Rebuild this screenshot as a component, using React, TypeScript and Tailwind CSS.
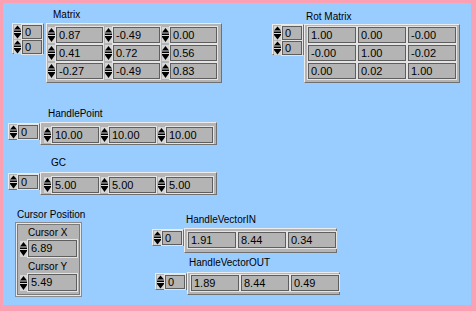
import React from "react";

// LabVIEW style front panel: Matrix / Rot Matrix / vectors / cursor cluster

function Spin({ tall }: { tall?: boolean }) {
  const h = tall ? 16 : 14;
  return (
    <svg width="7" height={h} viewBox={`0 0 7 ${h}`} className="shrink-0 block">
      <rect x="0" y="0" width="7" height={h} fill="#d6d6d6" />
      <path d={`M3.5 ${tall ? 1 : 0.5} L7 ${tall ? 5.5 : 4.5} L0 ${tall ? 5.5 : 4.5} Z`} fill="#000" />
      <rect x="0" y={tall ? 6.5 : 5.5} width="7" height="1.5" fill="#000" />
      <rect x="0" y={tall ? 9 : 8} width="7" height="1" fill="#000" />
      <path d={`M0 ${tall ? 10 : 9} L7 ${tall ? 10 : 9} L3.5 ${tall ? 15 : 13.5} Z`} fill="#000" />
    </svg>
  );
}

function Num({ v, className }: { v: string; className: string }) {
  return (
    <div
      className={`bg-[#b4b4b4] border border-[#5e5e5e] shadow-[0_0_0_1px_#e4e4e4] pl-[2px] text-[11px] text-black overflow-hidden whitespace-nowrap ${className}`}
    >
      {v}
    </div>
  );
}

const frame = "bg-[#b4b4b4] border border-t-[#ececec] border-l-[#ececec] border-b-[#707070] border-r-[#707070]";
const label = "text-[10px] leading-[12px] text-black whitespace-nowrap";

function Index({ rows, className }: { rows: number; className: string }) {
  return (
    <div className={`${frame} shrink-0 flex flex-col gap-[1px] p-[1px] ${className}`}>
      {Array.from({ length: rows }).map((_, i) => (
        <div key={i} className="flex items-center gap-[1px]">
          <Spin />
          <Num v="0" className="w-[22px] h-[14px] leading-[12px]" />
        </div>
      ))}
    </div>
  );
}

function SpinCell({ v }: { v: string }) {
  return (
    <div className="flex items-center gap-[1px] w-[57px]">
      <Spin tall />
      <Num v={v} className="w-[47px] h-[16px] leading-[14px]" />
    </div>
  );
}

function Cell({ v }: { v: string }) {
  return <Num v={v} className="w-[48px] h-[16px] leading-[14px]" />;
}

const matrix = [
  ["0.87", "-0.49", "0.00"],
  ["0.41", "0.72", "0.56"],
  ["-0.27", "-0.49", "0.83"],
];

const rot = [
  ["1.00", "0.00", "-0.00"],
  ["-0.00", "1.00", "-0.02"],
  ["0.00", "0.02", "1.00"],
];

export default function App() {
  return (
    <div className="w-[476px] h-[311px] bg-[#fb9fb3] pt-[3px] pl-[3px] pr-[5px] pb-[6px] font-['Liberation_Sans',Arial,sans-serif]">
      <div className="relative w-full h-full bg-[#99ccff]">
        {/* Matrix */}
        <div className="absolute left-[9px] top-[6px] flex flex-col">
          <div className={`${label} ml-[41px]`}>Matrix</div>
          <div className="mt-[2px] flex items-start gap-[2px]">
            <Index rows={2} className="w-[32px] h-[31px]" />
            <div className={`${frame} w-[176px] h-[60px] pl-[1px] pt-[3px] flex flex-col gap-[2px]`}>
              {matrix.map((r, i) => (
                <div key={i} className="flex">
                  {r.map((v, j) => (
                    <SpinCell key={j} v={v} />
                  ))}
                </div>
              ))}
            </div>
          </div>
        </div>

        {/* Rot Matrix */}
        <div className="absolute left-[269px] top-[8px] flex flex-col">
          <div className={`${label} ml-[34px]`}>Rot Matrix</div>
          <div className="mt-[1px] flex items-start">
            <Index rows={2} className="w-[32px] h-[31px]" />
            <div className={`${frame} w-[156px] h-[59px] pl-[3px] pt-[2px] flex flex-col gap-[2px]`}>
              {rot.map((r, i) => (
                <div key={i} className="flex gap-[2px]">
                  {r.map((v, j) => (
                    <Cell key={j} v={v} />
                  ))}
                </div>
              ))}
            </div>
          </div>
        </div>

        {/* HandlePoint */}
        <div className="absolute left-[5px] top-[105px] flex flex-col">
          <div className={`${label} ml-[40px]`}>HandlePoint</div>
          <div className="mt-[2px] flex items-start">
            <Index rows={1} className="mt-[1px] w-[32px] h-[17px]" />
            <div className={`${frame} w-[177px] h-[23px] pl-[3px] pt-[2px] flex`}>
              {["10.00", "10.00", "10.00"].map((v, j) => (
                <SpinCell key={j} v={v} />
              ))}
            </div>
          </div>
        </div>

        {/* GC */}
        <div className="absolute left-[5px] top-[154px] flex flex-col">
          <div className={`${label} ml-[43px]`}>GC</div>
          <div className="mt-[3px] flex items-start">
            <Index rows={1} className="mt-[1px] w-[32px] h-[17px]" />
            <div className={`${frame} w-[177px] h-[23px] pl-[3px] pt-[2px] flex`}>
              {["5.00", "5.00", "5.00"].map((v, j) => (
                <SpinCell key={j} v={v} />
              ))}
            </div>
          </div>
        </div>

        {/* Cursor Position cluster */}
        <div className="absolute left-[12px] top-[206px] flex flex-col">
          <div className={`${label} ml-[2px]`}>Cursor Position</div>
          <div className="mt-[1px] w-[67px] h-[75px] bg-[#b4b4b4] border border-[#8a8a8a] shadow-[inset_0_0_0_1px_#e8e8e8,inset_0_0_0_2px_#7a7a7a] pl-[4px] pt-[4px] flex flex-col">
            <div className={`${label} pl-[8px]`}>Cursor X</div>
            <div className="mt-[1px] flex items-center gap-[1px]">
              <Spin tall />
              <Num v="6.89" className="w-[49px] h-[17px] leading-[15px]" />
            </div>
            <div className={`${label} mt-[4px] pl-[8px]`}>Cursor Y</div>
            <div className="mt-[1px] flex items-center gap-[1px]">
              <Spin tall />
              <Num v="5.49" className="w-[49px] h-[17px] leading-[15px]" />
            </div>
          </div>
        </div>

        {/* HandleVectorIN */}
        <div className="absolute left-[149px] top-[211px] flex flex-col">
          <div className={`${label} ml-[34px]`}>HandleVectorIN</div>
          <div className="mt-[2px] flex items-start">
            <Index rows={1} className="mt-[1px] w-[32px] h-[17px]" />
            <div className={`${frame} w-[153px] h-[25px] pl-[3px] pt-[3px] flex gap-[2px]`}>
              {["1.91", "8.44", "0.34"].map((v, j) => (
                <Cell key={j} v={v} />
              ))}
            </div>
          </div>
        </div>

        {/* HandleVectorOUT */}
        <div className="absolute left-[152px] top-[254px] flex flex-col">
          <div className={`${label} ml-[34px]`}>HandleVectorOUT</div>
          <div className="mt-[3px] flex items-start">
            <Index rows={1} className="mt-[1px] w-[32px] h-[17px]" />
            <div className={`${frame} w-[153px] h-[23px] pl-[3px] pt-[2px] flex gap-[2px]`}>
              {["1.89", "8.44", "0.49"].map((v, j) => (
                <Cell key={j} v={v} />
              ))}
            </div>
          </div>
        </div>
      </div>
    </div>
  );
}
